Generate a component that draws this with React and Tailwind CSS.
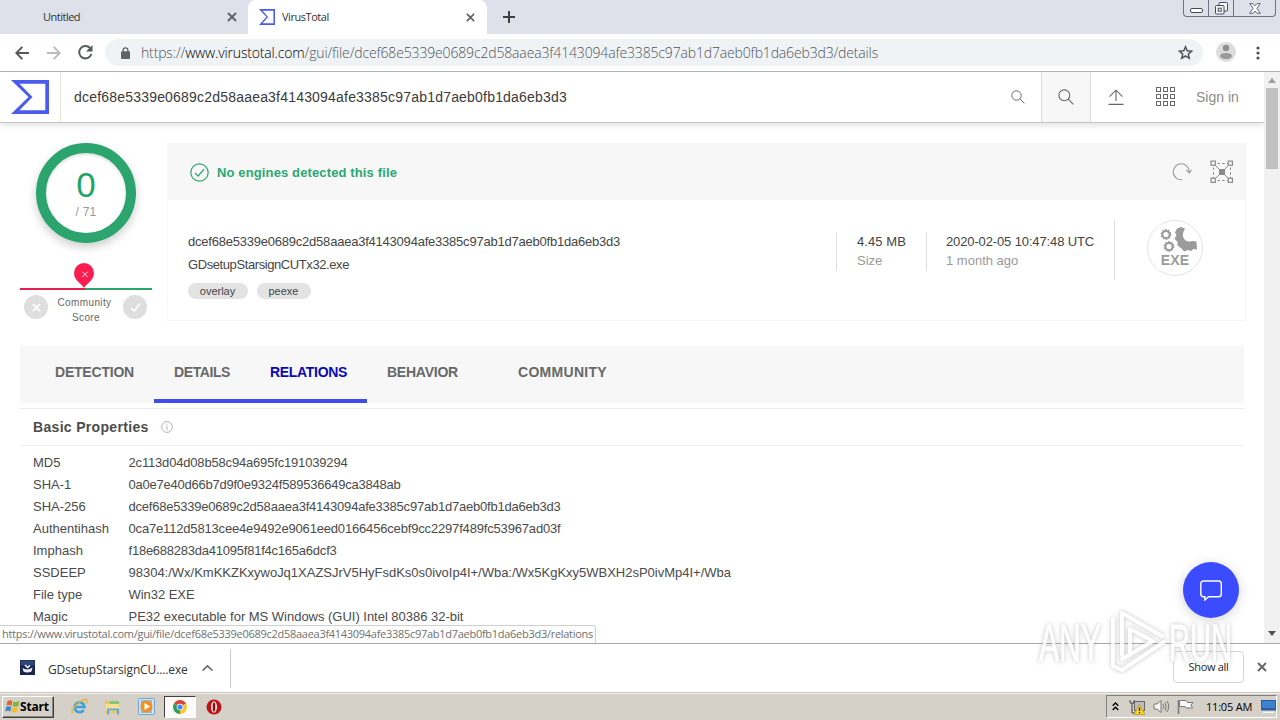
import React from 'react';

const HASH = 'dcef68e5339e0689c2d58aaea3f4143094afe3385c97ab1d7aeb0fb1da6eb3d3';

const PROPERTIES = [
  ['MD5', '2c113d04d08b58c94a695fc191039294', 'tracking-[-0.175px]'],
  ['SHA-1', '0a0e7e40d66b7d9f0e9324f589536649ca3848ab', 'tracking-[-0.231px]'],
  ['SHA-256', HASH, 'tracking-[-0.22px]'],
  ['Authentihash', '0ca7e112d5813cee4e9492e9061eed0166456cebf9cc2297f489fc53967ad03f', 'tracking-[-0.17px]'],
  ['Imphash', 'f18e688283da41095f81f4c165a6dcf3', 'tracking-[-0.232px]'],
  ['SSDEEP', '98304:/Wx/KmKKZKxywoJq1XAZSJrV5HyFsdKs0s0ivoIp4I+/Wba:/Wx5KgKxy5WBXH2sP0ivMp4I+/Wba', 'tracking-[-0.01px]'],
  ['File type', 'Win32 EXE', 'tracking-[-0.05px]'],
  ['Magic', 'PE32 executable for MS Windows (GUI) Intel 80386 32-bit', 'tracking-[-0.02px]'],
];

function VtLogo({ className }) {
  return (
    <svg className={className} viewBox="0 0 38 34" preserveAspectRatio="none">
      <path d="M0 0H38V34H0L17.5 17ZM8.500 3.700L21.500 17L8.500 30.300H34.300V3.700Z" fill="#4a5cf0" fillRule="evenodd" />
    </svg>
  );
}

function Cross({ className }) {
  return (
    <svg className={className} viewBox="0 0 10 10" fill="none" stroke="currentColor" strokeWidth="1.9">
      <path d="M1 1L9 9M9 1L1 9" />
    </svg>
  );
}

function TabStrip() {
  return (
    <div className="flex h-[34px] shrink-0 bg-[#dee1e9] font-['Open_Sans',sans-serif] text-[11px] text-[#333]">
      <div className="flex w-[248px] items-center rounded-br-lg pl-[43px] pr-[11px]">
        <span className="flex-1 tracking-[-0.5px]">Untitled</span>
        <Cross className="size-[10px] text-[#5f6368]" />
      </div>
      <div className="flex w-[239px] items-center rounded-t-lg bg-white pl-[11px] pr-[12px]">
        <VtLogo className="h-[16px] w-[16px]" />
        <span className="ml-[7px] flex-1 tracking-[-0.45px]">VirusTotal</span>
        <Cross className="size-[9px] text-[#5f6368]" />
      </div>
      <svg className="ml-[16px] mt-[11px] size-[12px]" viewBox="0 0 12 12" stroke="#3c4043" strokeWidth="2">
        <path d="M6 0V12M0 6H12" />
      </svg>
      <div className="ml-auto mr-[4px] flex h-[17px] w-[93px] rounded-b-[4px] border border-t-0 border-[#6d7482]">
        <div className="flex w-[25px] items-center justify-center border-r border-[#6d7482]">
          <svg className="mt-[4px] h-[5px] w-[13px]" viewBox="0 0 13 5">
            <rect x=".5" y=".5" width="12" height="4" rx="1.5" fill="#fff" stroke="#434b58" />
          </svg>
        </div>
        <div className="flex w-[25px] items-center justify-center border-r border-[#6d7482]">
          <svg className="size-[13px]" viewBox="0 0 13 13" fill="#f5f6f8" stroke="#434b58">
            <rect x="4" y=".5" width="8.5" height="8.5" rx="1" />
            <rect x=".5" y="3.5" width="8.5" height="8.5" rx="1" />
            <rect x="3.2" y="6.2" width="3" height="3" />
          </svg>
        </div>
        <div className="flex flex-1 items-center justify-center">
          <svg className="h-[11px] w-[12px]" viewBox="0 0 12 11" fill="#fff" stroke="#515966" strokeWidth=".9">
            <path d="M.7.6H4L6 2.8L8 .6H11.3L7.9 5.4L11.3 10.3H8L6 8L4 10.3H.7L4.1 5.4Z" />
          </svg>
        </div>
      </div>
    </div>
  );
}

function Toolbar() {
  return (
    <div className="flex h-[38px] shrink-0 items-center border-b border-[#b0b0b0] bg-white">
      <svg className="ml-[15px] h-[14px] w-[14px]" viewBox="0 0 14 14" fill="none" stroke="#55595e" strokeWidth="2">
        <path d="M14 7H1.5M7.3.9L1.3 7L7.3 13.1" />
      </svg>
      <svg className="ml-[18px] h-[14px] w-[14px]" viewBox="0 0 14 14" fill="none" stroke="#b9bbbe" strokeWidth="2">
        <path d="M0 7H12.5M6.7.9L12.7 7L6.7 13.1" />
      </svg>
      <svg className="ml-[17px] h-[15px] w-[15px]" viewBox="0 0 15 15">
        <path d="M12 3A6.2 6.2 0 1 0 13.4 9" fill="none" stroke="#55595e" strokeWidth="2" />
        <path d="M14.5 0V6.5H8Z" fill="#55595e" />
      </svg>
      <div className="ml-[12px] flex h-[27px] w-[1098px] items-center rounded-full bg-[#f0f3f6] pl-[16px] pr-[10px]">
        <svg className="h-[12px] w-[9px]" viewBox="0 0 9 12">
          <path d="M2.1 5V3.2a2.4 2.4 0 0 1 4.8 0V5" fill="none" stroke="#5f6368" strokeWidth="1.3" />
          <rect y="4.3" width="9" height="7.7" rx="1" fill="#5f6368" />
        </svg>
        <span className="ml-[11px] flex-1 whitespace-nowrap font-['Open_Sans',sans-serif] text-[14px] leading-[20px] font-light tracking-[-0.156px] text-[#50555a]">
          https://<span className="text-black">www.virustotal.com</span>/gui/file/{HASH}/details
        </span>
        <svg className="size-[15px]" viewBox="0 0 15 15" fill="none" stroke="#50555a" strokeWidth="1.5">
          <path d="M7.5 1.8L9.2 5.8L13.6 6.2L10.3 9.1L11.3 13.3L7.5 11L3.7 13.3L4.7 9.1L1.4 6.2L5.8 5.8Z" />
        </svg>
      </div>
      <svg className="mb-[1px] ml-[13px] size-[20px]" viewBox="0 0 20 20">
        <circle cx="10" cy="10" r="10" fill="#dcdcdc" />
        <circle cx="10" cy="6" r="3.2" fill="#8f8f8f" />
        <ellipse cx="10" cy="14" rx="6" ry="3.1" fill="#9a9a9a" />
      </svg>
      <svg className="ml-[20px] h-[14px] w-[4px]" viewBox="0 0 4 14" fill="#4d5156">
        <circle cx="2" cy="2" r="1.6" />
        <circle cx="2" cy="7" r="1.6" />
        <circle cx="2" cy="12" r="1.6" />
      </svg>
    </div>
  );
}

function Magnifier({ className }) {
  return (
    <svg className={className} viewBox="0 0 16 16" fill="none" stroke="#666" strokeWidth="1.1">
      <circle cx="6.3" cy="6.3" r="5.4" />
      <path d="M10.2 10.2L15.3 15.3" />
    </svg>
  );
}

function SiteHeader() {
  return (
    <header className="flex h-[51px] shrink-0 items-stretch border-b border-[#c4c4c4] bg-white shadow-[0_2px_7px_rgba(0,0,0,0.13)]">
      <div className="flex w-[61px] items-center border-r border-[#e3e3dc] pl-[11px]">
        <VtLogo className="h-[34px] w-[38px]" />
      </div>
      <div className="flex flex-1 items-center justify-between pl-[13px] pr-[16px]">
        <span className="text-[14px] tracking-[0.197px] text-[#3a3a3a]">{HASH}</span>
        <Magnifier className="size-[14px]" />
      </div>
      <div className="flex w-[50px] items-center justify-center border-x border-[#ddd] bg-[#f7f7f7]">
        <Magnifier className="size-[16px]" />
      </div>
      <div className="flex w-[173px] items-center pl-[17px]">
        <svg className="h-[16px] w-[16px]" viewBox="0 0 16 16" fill="none" stroke="#666" strokeWidth="1.1">
          <path d="M8 12V1.5M1.5 7.7L8 1.2L14.5 7.7M.5 15.4H15.5" />
        </svg>
        <svg className="ml-[32px] h-[20px] w-[19px]" viewBox="0 0 19 20" fill="none" stroke="#666">
          {[0, 7, 14].map((y) =>
            [0, 7, 14].map((x) => <rect key={`${x}-${y}`} x={x + 0.5} y={y + 0.5} width="4" height="4" />)
          )}
        </svg>
        <span className="ml-[21px] whitespace-nowrap text-[14px] text-[#8c8c8c]">Sign in</span>
      </div>
    </header>
  );
}

function ScorePanel() {
  return (
    <div className="flex w-[132px] shrink-0 flex-col self-start">
      <div className="ml-[16px] flex size-[100px] flex-col items-center rounded-full border-[10px] border-[#2ba46d] pt-[14px] shadow-[0_4px_10px_rgba(0,0,0,0.2),inset_0_2px_3px_rgba(0,0,0,0.12)]">
        <span className="text-[35px] leading-[36px] text-[#1ca665]">0</span>
        <span className="mt-[2px] text-[12px] leading-[14px] tracking-[0.25px] text-[#999]">/ 71</span>
      </div>
      <svg className="ml-[54px] mt-[20px] h-[25px] w-[20px]" viewBox="0 0 20 25">
        <path d="M10 25C8 21 0 17.5 0 10A10 10 0 0 1 20 10C20 17.5 12 21 10 25Z" fill="#fb1d4f" />
        <path d="M8.5 8.8L13.5 13.8M13.5 8.8L8.5 13.8" stroke="#fff" strokeWidth=".9" />
      </svg>
      <div className="flex h-[2px]">
        <div className="w-[65px] bg-[#e0214f]" />
        <div className="flex-1 bg-[#2ba46d]" />
      </div>
      <div className="mt-[5px] flex pl-[4px]">
        <div className="flex size-[24px] items-center justify-center rounded-full bg-[#dedede]">
          <Cross className="size-[9px] text-white" />
        </div>
        <div className="w-[75px] pr-[2px] text-center text-[10px] leading-[15px] tracking-[0.38px] text-[#666]">
          Community
          <br />
          <span className="pl-[3px]">Score</span>
        </div>
        <div className="flex size-[24px] items-center justify-center rounded-full bg-[#dedede]">
          <svg className="size-[11px]" viewBox="0 0 11 11" fill="none" stroke="#fff" strokeWidth="1.6">
            <path d="M1 6L4 9L10 1.5" />
          </svg>
        </div>
      </div>
    </div>
  );
}

function GraphIcon() {
  return (
    <svg className="size-[24px]" viewBox="0 0 24 24" fill="none" stroke="#8a8a8a">
      <path d="M4.5 4.5L19.5 19.5M19.5 4.5L4.5 19.5" />
      <path d="M6 3.5H18M6 20.5H18M3.5 6V18M20.5 6V18" strokeDasharray="2.5 2.2" strokeDashoffset="-1.5" />
      <rect x="9" y="9" width="6" height="6" fill="#8a8a8a" stroke="none" />
      <g fill="#f7f7f7" strokeWidth="1.2">
        <rect x="1.1" y="1.1" width="4.2" height="4.2" />
        <rect x="18.2" y="1.1" width="4.2" height="4.2" />
        <rect x="1.1" y="18.2" width="4.2" height="4.2" />
        <rect x="18.2" y="18.2" width="4.2" height="4.2" />
      </g>
    </svg>
  );
}

function ExeBadge() {
  return (
    <div className="ml-[32px] flex size-[56px] flex-col items-center rounded-full border border-[#e3e3e3] bg-white pt-[5px] text-[#9b9b9b]">
      <svg className="ml-[7px] h-[27px] w-[39px]" viewBox="0 0 39 27">
        <g fill="none" stroke="#9b9b9b" strokeWidth="2">
          <circle cx="7" cy="8.5" r="3.600" />
          <circle cx="10" cy="20.500" r="3.600" />
        </g>
        <g fill="none" stroke="#9b9b9b" strokeWidth="1.200" strokeDasharray="1.7 1.3">
          <circle cx="7" cy="8.5" r="4.800" />
          <circle cx="10" cy="20.500" r="4.800" />
        </g>
        <path d="M18 2.5L22 1L26 2.5L24.5 6C22 11 27 17.500 33 15L37.500 15.500L38 23.500L34.500 23L32 25L29 24L25 25.500L22.5 22.500L18.5 19.500L18.500 16L15.500 12.500L17.5 9.5L16 6.5Z" fill="#9b9b9b" />
      </svg>
      <span className="text-[14px] leading-[14px] font-bold tracking-[0.2px]">EXE</span>
    </div>
  );
}

function Summary() {
  return (
    <div className="ml-[15px] flex h-[178px] w-[1079px] flex-col border border-t-0 border-[#f5f5f5]">
      <div className="flex h-[57px] shrink-0 items-center bg-[#f7f7f7] pl-[22px] pr-[11px]">
        <svg className="mt-[1px] size-[19px]" viewBox="0 0 19 19" fill="none" stroke="#2ba46d" strokeWidth="1.2">
          <circle cx="9.5" cy="9.5" r="8.7" />
          <path d="M5 9.8L8.2 13L14 6.2" />
        </svg>
        <span className="ml-[8px] mt-[2px] flex-1 text-[13px] font-bold tracking-[0.129px] text-[#2ba872]">No engines detected this file</span>
        <svg className="size-[20px]" viewBox="0 0 20 20" fill="none" stroke="#999" strokeWidth="1.1">
          <path d="M10.5 17.7A8 8 0 1 1 17.2 10M14.3 8.2L17.3 11L19.5 7.8" />
        </svg>
        <div className="ml-[18px]">
          <GraphIcon />
        </div>
      </div>
      <div className="flex flex-1 pl-[20px] pt-[20px]">
        <div className="w-[648px] pt-[13px] text-[13px] leading-[18px] text-[#454545]">
          <div className="tracking-[-0.22px]">{HASH}</div>
          <div className="mt-[5px] tracking-[-0.41px]">GDsetupStarsignCUTx32.exe</div>
          <div className="mt-[9px] flex gap-[9px] text-[11px] leading-[16px]">
            <span className="w-[60px] rounded-full bg-[#e3e3e3] pr-[1px] text-center">overlay</span>
            <span className="w-[54px] rounded-full bg-[#e3e3e3] pr-[1px] text-center">peexe</span>
          </div>
        </div>
        <div className="mt-[12px] h-[39px] w-[90px] border-l border-[#ddd] pl-[20px] text-[13px] leading-[19px]">
          <div className="tracking-[0.08px] text-[#444]">4.45 MB</div>
          <div className="text-[#999]">Size</div>
        </div>
        <div className="mt-[12px] h-[39px] w-[188px] border-l border-[#ddd] pl-[19px] text-[13px] leading-[19px]">
          <div className="tracking-[-0.13px] text-[#444]">2020-02-05 10:47:48 UTC</div>
          <div className="text-[#999]">1 month ago</div>
        </div>
        <div className="h-[60px] border-l border-[#ddd]">
          <ExeBadge />
        </div>
      </div>
    </div>
  );
}

function DetailTabs() {
  return (
    <nav className="mt-[25px] flex h-[57px] w-[1224px] bg-[#f7f7f7] text-[14px] leading-[52px] font-bold text-[#686868]">
      <div className="w-[134px] pl-[35px] tracking-[-0.21px]">DETECTION</div>
      <div className="w-[96px] border-b-4 border-[#3f4cf0] pl-[20px] tracking-[-0.4px]">DETAILS</div>
      <div className="w-[117px] border-b-4 border-[#3f4cf0] pl-[20px] tracking-[-0.3px] text-[#0a0ab4]">RELATIONS</div>
      <div className="w-[131px] pl-[20px] tracking-[-0.24px]">BEHAVIOR</div>
      <div className="pl-[20px] tracking-[0.29px]">COMMUNITY</div>
    </nav>
  );
}

function BasicProperties() {
  return (
    <section className="mt-[5px] w-[1224px] border-t border-[#ececec]">
      <div className="flex h-[37px] items-center border-b border-[#f0f0f0] pl-[13px]">
        <h2 className="text-[14px] font-bold tracking-[0.32px] text-[#4c4c4c]">Basic Properties</h2>
        <svg className="ml-[12px] size-[12px]" viewBox="0 0 12 12" fill="none" stroke="#b5b5b5">
          <circle cx="6" cy="6" r="5.4" />
          <path d="M6 5V9.3M6 2.7V4" />
        </svg>
      </div>
      <dl className="pl-[13px] pt-[6px] text-[13px] leading-[22px] text-[#4a4a4a]">
        {PROPERTIES.map(([name, value, tracking]) => (
          <div key={name} className="flex whitespace-nowrap">
            <dt className="w-[95.5px]">{name}</dt>
            <dd className={tracking}>{value}</dd>
          </div>
        ))}
      </dl>
    </section>
  );
}

function Scrollbar() {
  return (
    <div className="flex w-[16px] shrink-0 flex-col items-center bg-[#f1f1f1]">
      <svg className="mt-[6px] h-[5px] w-[8px]" viewBox="0 0 8 5" fill="#a0a0a0"><path d="M4 0L8 5H0Z" /></svg>
      <div className="mt-[5px] h-[81px] w-[12px] bg-[#c1c1c1]" />
      <svg className="mb-[7px] mt-auto h-[5px] w-[8px]" viewBox="0 0 8 5" fill="#505050"><path d="M0 0H8L4 5Z" /></svg>
    </div>
  );
}

function DownloadBar() {
  return (
    <div className="flex h-[49px] shrink-0 items-center border-t border-[#a9a9a9] bg-white pl-[20px] font-['Open_Sans',sans-serif]">
      <svg className="mb-[2px] size-[15px]" viewBox="0 0 15 15">
        <rect width="15" height="15" fill="#17254f" />
        <rect x=".5" y=".5" width="14" height="5" fill="#30457c" />
        <path d="M2.500 8Q7 11 12.500 7.500L11.500 11.500Q7 13.500 3.500 11.500Z" fill="#e9edf5" />
        <path d="M5 5L7.500 7.500L10 5.500" fill="none" stroke="#fff" strokeWidth="1.5" />
      </svg>
      <span className="ml-[13px] mt-[3px] text-[12px] tracking-[-0.12px] text-[#333]">GDsetupStarsignCU....exe</span>
      <svg className="ml-[14px] h-[6px] w-[11px]" viewBox="0 0 11 6" fill="none" stroke="#666" strokeWidth="1.6">
        <path d="M.6 5.5L5.5.9L10.4 5.5" />
      </svg>
      <div className="ml-[17px] h-[39px] w-px bg-[#ccc]" />
      <div className="ml-auto mb-[2px] flex h-[32px] w-[71px] items-center justify-center rounded-[4px] border border-[#d4d4d4] text-[11px] tracking-[-0.3px] text-[#222]">
        Show all
      </div>
      <Cross className="mb-[2px] ml-[13px] mr-[13px] size-[10px] text-[#666]" />
    </div>
  );
}

function Taskbar() {
  return (
    <div className="flex h-[28px] shrink-0 items-center border-t border-[#c9c6c0] bg-[#d5d0c8] pl-[2px] pr-[3px] font-['Open_Sans',sans-serif] shadow-[inset_0_1px_0_#f4f2ee]">
      <div className="flex h-[22px] w-[52px] items-center border border-b-[#404040] border-l-white border-r-[#404040] border-t-white pl-[2px] shadow-[inset_-1px_-1px_0_#8a867e]">
        <svg className="h-[15px] w-[15px]" viewBox="0 0 15 15">
          <path d="M2.5 2Q5 .5 7.3 2L6.5 6.7Q4 5.5 1.5 6.8Z" fill="#e8622c" />
          <path d="M8.3 2.4Q11 3.8 14.5 2L13.4 6.8Q10.5 8.5 7.5 7Z" fill="#7db83b" />
          <path d="M1.3 7.8Q4 6.5 6.3 7.8L5.3 12.4Q2.8 11.2.2 12.6Z" fill="#3c86d0" />
          <path d="M7.3 8.2Q10 9.7 13.2 8L12 12.6Q9 14.3 6.3 12.8Z" fill="#f4bd27" />
        </svg>
        <span className="text-[12px] leading-[18px] font-bold tracking-[-0.2px] text-black">Start</span>
      </div>
      <svg className="ml-[17px] size-[17px]" viewBox="0 0 17 17" fill="none">
        <path d="M3.500 9H13.500A5 5 0 1 0 12.700 12" stroke="#3ba2dc" strokeWidth="2.6" />
        <path d="M1.5 15.5C-1 12 9 1.5 15.5 1.5C17 2 16 4.5 15 5.5" stroke="#e5b53b" strokeWidth="1.3" />
      </svg>
      <svg className="ml-[16px] size-[17px]" viewBox="0 0 17 17">
        <path d="M1 3H6L8 5H16V15H1Z" fill="#e9c75f" />
        <rect x="6" y="3" width="9" height="4" fill="#8bc37a" />
        <rect x="1.500" y="6" width="14" height="7" fill="#f6df8e" />
        <path d="M4 16.500V11.500H14V16.500" fill="none" stroke="#68abd9" strokeWidth="2" />
      </svg>
      <svg className="ml-[17px] size-[17px]" viewBox="0 0 17 17">
        <rect x=".5" y=".5" width="16" height="16" rx="1" fill="#cfe1f2" stroke="#75a5d1" />
        <rect x="3" y="2" width="11" height="13" fill="#8ebbe2" />
        <circle cx="8.500" cy="8.500" r="6" fill="#f1921d" />
        <path d="M6.500 5L12 8.500L6.500 12Z" fill="#fff" />
      </svg>
      <div className="ml-[9px] flex h-[22px] w-[32px] items-center justify-center border border-b-white border-l-[#404040] border-r-white border-t-[#404040] bg-[#fbfaf8]">
        <svg className="size-[14px]" viewBox="0 0 14 14">
          <path d="M7 7L.94 3.5A7 7 0 0 1 13.06 3.5Z" fill="#dc4437" />
          <path d="M7 7L13.06 3.5A7 7 0 0 1 7 14Z" fill="#f7c92f" />
          <path d="M7 7L7 14A7 7 0 0 1 .94 3.5Z" fill="#2f9e57" />
          <circle cx="7" cy="7" r="3.300" fill="#fff" />
          <circle cx="7" cy="7" r="2.600" fill="#4285f4" />
        </svg>
      </div>
      <svg className="ml-[10px] size-[16px]" viewBox="0 0 16 16">
        <circle cx="8" cy="8" r="7.500" fill="#b91519" />
        <ellipse cx="8" cy="8" rx="3" ry="5.700" fill="#f4e7e5" />
        <ellipse cx="8" cy="8" rx="1.300" ry="4.700" fill="#8c1013" />
      </svg>
      <div className="ml-auto flex h-[23px] w-[171px] items-center border border-b-white border-l-[#808080] border-r-white border-t-[#808080] pl-[5px]">
        <svg className="h-[9px] w-[7px]" viewBox="0 0 7 9" fill="none" stroke="#000" strokeWidth="1.400">
          <path d="M.7 3.800L3.500 1L6.300 3.800M.7 8L3.500 5.200L6.300 8" />
        </svg>
        <svg className="ml-[10px] h-[16px] w-[16px]" viewBox="0 0 16 16">
          <rect x="5.500" y="2.500" width="10" height="9" fill="#b9bcc0" stroke="#666" />
          <path d="M1 1V4H5V1M3 4V14H6" fill="none" stroke="#444" />
          <path d="M10.500 5.500L16 15.500H5Z" fill="#f6d62c" stroke="#b79509" strokeWidth=".7" />
          <path d="M10.500 8.500V12M10.500 13V14.300" stroke="#222" strokeWidth="1.300" />
        </svg>
        <svg className="ml-[8px] h-[15px] w-[17px]" viewBox="0 0 17 15" fill="none" stroke="#777">
          <path d="M1 5H4L8 1.500V13.500L4 10H1Z" fill="#f5f5f5" />
          <path d="M10 5Q11.500 7.500 10 10M12 3.300Q14.500 7.500 12 11.700M14 2Q17.500 7.500 14 13" />
        </svg>
        <svg className="ml-[7px] h-[15px] w-[17px]" viewBox="0 0 17 15" fill="#f7f7f7" stroke="#777">
          <path d="M1.500 1V15" strokeWidth="1.500" />
          <path d="M2.500 1.500H9L10.500 3.500H16L14 6L15.500 9H9L8 7.500H2.500Z" />
        </svg>
        <span className="ml-[12px] mt-[1px] w-[51px] whitespace-nowrap text-[11px] tracking-[-0.2px] text-black">11:05 AM</span>
        <svg className="ml-[4px] h-[13px] w-[15px]" viewBox="0 0 15 13">
          <rect width="15" height="10.500" fill="#2d5d9e" />
          <rect x="1" y="1" width="13" height="7" fill="#3d82cc" />
          <path d="M2 12.300H13" stroke="#f3f3f3" strokeWidth="1.400" />
        </svg>
      </div>
    </div>
  );
}

function Watermark() {
  return (
    <svg className="pointer-events-none absolute left-[1034px] top-[606px] h-[70px] w-[204px]" viewBox="0 0 204 70">
      <g className="[filter:drop-shadow(0_0_2px_rgba(110,110,110,0.5))]" opacity=".85">
        <g fill="#fff" stroke="#fff" strokeWidth=".8" fontFamily="Liberation Sans Narrow, Liberation Sans, sans-serif" fontSize="51">
          <text x="5" y="55" textLength="62" lengthAdjust="spacingAndGlyphs">ANY</text>
          <text x="135" y="55" textLength="63" lengthAdjust="spacingAndGlyphs">RUN</text>
        </g>
        <g fill="none" stroke="#fff" strokeWidth="4" strokeLinejoin="round" strokeLinecap="round">
          <path d="M88 49V7L128 30" />
          <path d="M96 49V23L119 35L88 53" />
          <path d="M79 13V60L88 64L130 36" />
        </g>
      </g>
    </svg>
  );
}

export default function App() {
  return (
    <div className="relative flex h-[720px] w-[1280px] flex-col overflow-hidden bg-white font-['Liberation_Sans',sans-serif]">
      <TabStrip />
      <Toolbar />
      <div className="relative flex h-[571px] shrink-0">
        <div className="flex flex-1 flex-col overflow-hidden">
          <SiteHeader />
          <main className="pl-[20px] pt-[20px]">
            <div className="flex h-[178px]">
              <ScorePanel />
              <Summary />
            </div>
            <DetailTabs />
            <BasicProperties />
          </main>
        </div>
        <Scrollbar />
        <div className="absolute bottom-0 left-0 h-[18px] w-[596px] whitespace-nowrap rounded-tr-[3px] border-r border-t border-[#cfcfcf] bg-white pl-[2px] font-['Open_Sans',sans-serif] text-[11px] leading-[16px] tracking-[-0.282px] text-[#707070]">
          https://www.virustotal.com/gui/file/{HASH}/relations
        </div>
        <div className="absolute bottom-[25px] right-[41px] flex size-[56px] items-center justify-center rounded-full bg-[#3b4bff] shadow-[0_2px_12px_rgba(0,0,0,0.18)]">
          <svg className="h-[21px] w-[22px]" viewBox="0 0 22 21" fill="none" stroke="#fff" strokeWidth="1.400">
            <path d="M3.500 1H18.500Q21.300 1 21.300 3.800V14Q21.300 16.800 18.500 16.800H8.500L4.800 20V16.800H3.500Q.8 16.800.8 14V3.800Q.8 1 3.500 1Z" />
          </svg>
        </div>
      </div>
      <DownloadBar />
      <Taskbar />
      <Watermark />
    </div>
  );
}
